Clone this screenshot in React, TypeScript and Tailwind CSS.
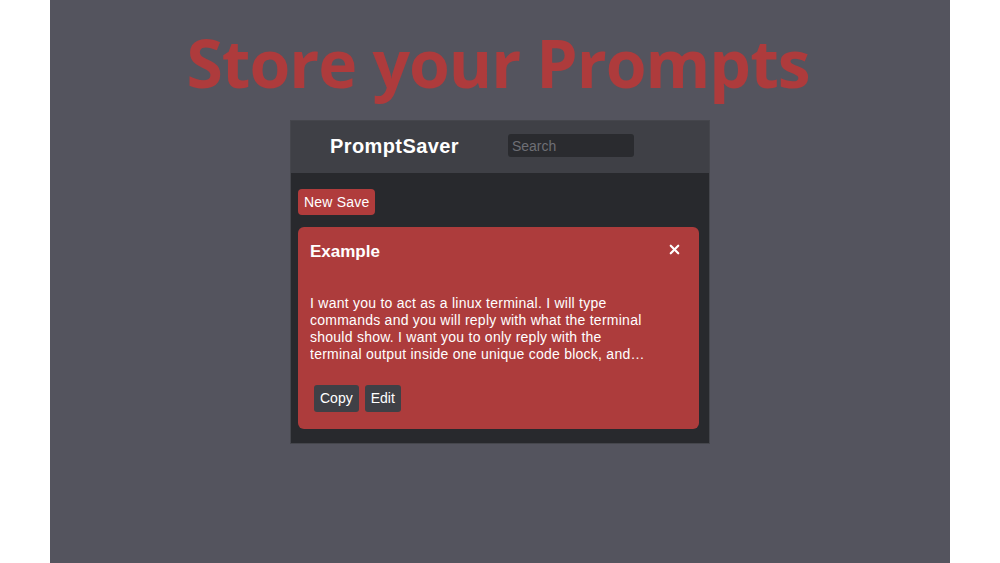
import { X } from 'lucide-react';

const promptText =
  'I want you to act as a linux terminal. I will type commands and you will reply with what the terminal should show. I want you to only reply with the terminal output inside one unique code block, and nothing else. Do not write explanations.';

const App = () => {
  return (
    <div className="w-full h-[563px] bg-white flex justify-center">
      <div className="w-[900px] h-full bg-[#54545e] flex flex-col items-center">
        {/* Title */}
        <h1 className="mt-[15px] -ml-[4px] text-[66px] leading-[94px] font-bold text-[#ae3b3c] font-['Open_Sans',sans-serif] tracking-[-1px]">
          Store your Prompts
        </h1>

        {/* App window */}
        <div className="mt-[11px] w-[420px] bg-[#28292d] border border-[#45464c] font-['Liberation_Sans',Arial,sans-serif]">
          <div className="h-[52px] bg-[#3f4046] flex items-center">
            <span className="ml-[39px] -mt-[2px] text-[20px] font-bold text-white tracking-[0.4px]">PromptSaver</span>
            <input
              type="text"
              placeholder="Search"
              className="ml-[49px] -mt-[3px] w-[126px] h-[23px] rounded-[3px] bg-[#2a2b2f] px-[4px] text-[14px] text-white placeholder:text-[#6e6f75] outline-none"
            />
          </div>

          <div className="pl-[7px] pr-[10px] pt-[16px] pb-[14px]">
            <button className="h-[26px] px-[6px] rounded-[4px] bg-[#b03c3c] text-[14px] text-white tracking-[0.2px]">
              New Save
            </button>

            {/* Card */}
            <div className="mt-[12px] h-[202px] rounded-[6px] bg-[#ad3c3c] px-[12px] pt-[14px] flex flex-col">
              <div className="flex items-center justify-between">
                <h2 className="text-[17px] font-bold text-white leading-[22px]">Example</h2>
                <X className="w-[15px] h-[15px] text-white mr-[5px] -mt-[6px]" strokeWidth={3.5} />
              </div>
              <p className="mt-[32px] max-w-[342px] text-[14px] leading-[17px] text-white tracking-[0.25px] line-clamp-4">
                {promptText}
              </p>
              <div className="mt-[22px] ml-[4px] flex gap-[6px]">
                <button className="h-[27px] px-[6px] rounded-[3px] bg-[#3f4046] text-[14px] text-white">
                  Copy
                </button>
                <button className="h-[27px] px-[6px] rounded-[3px] bg-[#3f4046] text-[14px] text-white">
                  Edit
                </button>
              </div>
            </div>
          </div>
        </div>
      </div>
    </div>
  );
};

export default App;
